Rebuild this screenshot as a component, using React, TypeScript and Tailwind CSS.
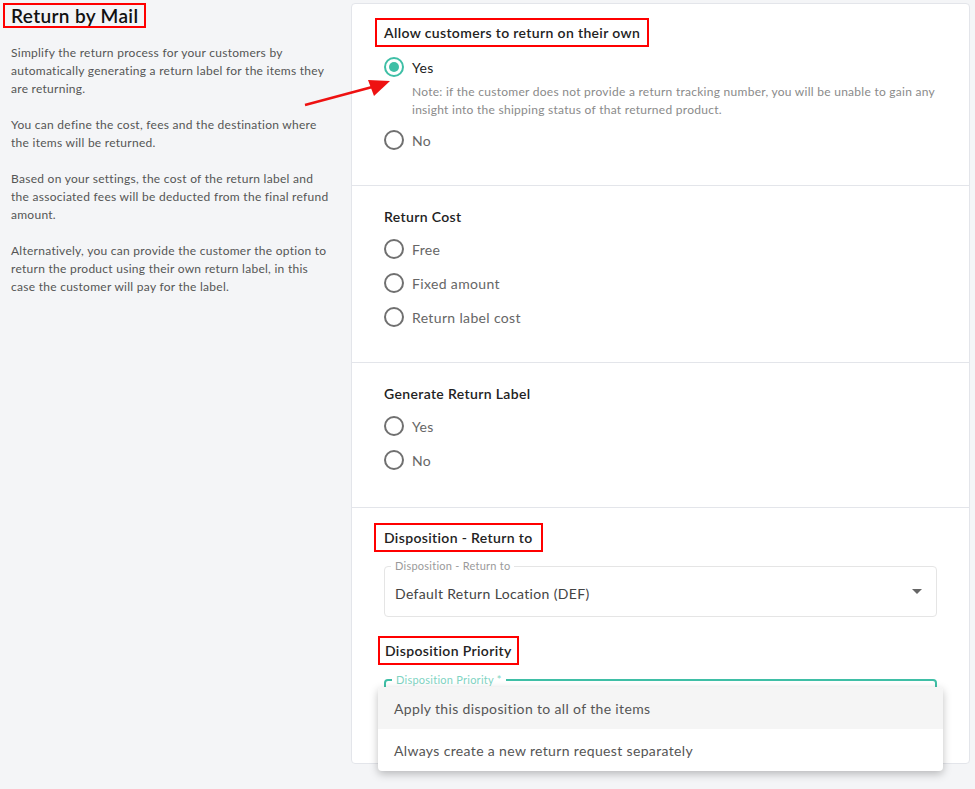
import React from "react";

const font = { fontFamily: "Lato, 'Noto Sans', sans-serif" };

function Radio({ checked = false }: { checked?: boolean }) {
  return checked ? (
    <span className="flex h-[20px] w-[20px] shrink-0 items-center justify-center rounded-full border-2 border-[#3fbfa6]">
      <span className="h-[10px] w-[10px] rounded-full bg-[#3fbfa6]" />
    </span>
  ) : (
    <span className="h-[20px] w-[20px] shrink-0 rounded-full border-2 border-[#707070]" />
  );
}

function Option({ label, checked = false }: { label: string; checked?: boolean }) {
  return (
    <div className="flex h-[34px] items-center gap-[8px]">
      <Radio checked={checked} />
      <span className={checked ? "text-[14px] tracking-[0.35px] text-[#222]" : "text-[14px] tracking-[0.35px] text-[#666]"}>{label}</span>
    </div>
  );
}

export default function App() {
  return (
    <div className="relative flex min-h-[789px] w-[975px] bg-[#f4f5f7]" style={font}>
      <div className="w-[351px] shrink-0 pl-[3px] pt-[3px]">
        <div className="inline-block border-2 border-[#ff0000] px-[6px] text-[19px] leading-[21px] font-semibold tracking-[0.35px] text-[#111]">
          Return by Mail
        </div>
        <div className="mt-[15px] flex w-[330px] flex-col gap-[18px] pl-[8px] text-[12px] leading-[18px] tracking-[0.27px] text-[#555]">
          <p>Simplify the return process for your customers by automatically generating a return label for the items they are returning.</p>
          <p>You can define the cost, fees and the destination where the items will be returned.</p>
          <p>Based on your settings, the cost of the return label and the associated fees will be deducted from the final refund amount.</p>
          <p>Alternatively, you can provide the customer the option to return the product using their own return label, in this case the customer will pay for the label.</p>
        </div>
      </div>

      <div className="mt-[3px] mb-[25px] mr-[5px] flex h-[761px] flex-1 flex-col rounded-[4px] border border-[#e3e5ea] bg-white">
        <div className="flex h-[182px] flex-col border-b border-[#e3e5ea] pl-[23px] pr-[20px] pt-[14px]">
          <div className="self-start border-2 border-[#ff0000] px-[7px] py-[4px] text-[14px] leading-[17px] font-semibold tracking-[0.35px] text-[#222]">
            Allow customers to return on their own
          </div>
          <div className="mt-[3px] pl-[9px]">
            <Option label="Yes" checked />
            <p className="-mt-[1px] pl-[28px] text-[12px] leading-[18px] tracking-[0.27px] text-[#8a8a8a]">
              Note: if the customer does not provide a return tracking number, you will be unable to gain any insight into the shipping status of that returned product.
            </p>
            <div className="mt-[4px]">
              <Option label="No" />
            </div>
          </div>
        </div>

        <div className="flex h-[177px] flex-col border-b border-[#e3e5ea] pl-[32px] pt-[22px]">
          <div className="text-[14px] leading-[18px] font-semibold tracking-[0.35px] text-[#222]">Return Cost</div>
          <div className="mt-[6px]">
            <Option label="Free" />
            <Option label="Fixed amount" />
            <Option label="Return label cost" />
          </div>
        </div>

        <div className="flex h-[145px] flex-col border-b border-[#e3e5ea] pl-[32px] pt-[22px]">
          <div className="text-[14px] leading-[18px] font-semibold tracking-[0.35px] text-[#222]">Generate Return Label</div>
          <div className="mt-[6px]">
            <Option label="Yes" />
            <Option label="No" />
          </div>
        </div>

        <div className="flex flex-col pl-[22px] pr-[32px] pt-[15px]">
          <div className="self-start border-2 border-[#ff0000] px-[8px] py-[4px] text-[14px] leading-[17px] font-semibold tracking-[0.35px] text-[#222]">
            Disposition - Return to
          </div>
          <div className="relative ml-[10px] mt-[14px] flex h-[51px] items-center rounded-[4px] border border-[#e5e5e5] px-[10px]">
            <span className="absolute -top-[8px] left-[6px] bg-white px-[4px] text-[11px] leading-[14px] tracking-[0.25px] text-[#9a9a9a]">
              Disposition - Return to
            </span>
            <span className="mt-[4px] text-[14px] tracking-[0.35px] text-[#444]">Default Return Location (DEF)</span>
            <span className="ml-auto mr-[4px] h-0 w-0 border-x-[5px] border-t-[5px] border-x-transparent border-t-[#666]" />
          </div>
          <div className="ml-[4px] mt-[19px] self-start border-2 border-[#ff0000] px-[5px] py-[4px] text-[14px] leading-[17px] font-semibold tracking-[0.35px] text-[#222]">
            Disposition Priority
          </div>
          <div className="relative ml-[10px] mt-[14px] h-[50px] rounded-[4px] border-2 border-[#3fbfa6]">
            <span className="absolute -top-[8px] left-[6px] bg-white px-[4px] text-[11px] leading-[14px] tracking-[0.25px] text-[#7fd4c3]">
              Disposition Priority *
            </span>
          </div>
        </div>
      </div>

      <div className="absolute left-[378px] top-[687px] w-[565px] overflow-hidden rounded-[4px] bg-white shadow-[0_3px_8px_rgba(0,0,0,0.25)]">
        <div className="flex h-[42px] items-center bg-[#f5f5f5] px-[16px] text-[14px] tracking-[0.35px] text-[#555]">
          Apply this disposition to all of the items
        </div>
        <div className="flex h-[42px] items-center px-[16px] text-[14px] tracking-[0.35px] text-[#555]">
          Always create a new return request separately
        </div>
      </div>

      <svg className="pointer-events-none absolute left-0 top-0" width="975" height="789">
        <line x1="305" y1="105" x2="376" y2="86" stroke="#ee1111" strokeWidth="2.5" />
        <polygon points="390,81 368,80 374,96" fill="#ee1111" />
      </svg>
    </div>
  );
}
